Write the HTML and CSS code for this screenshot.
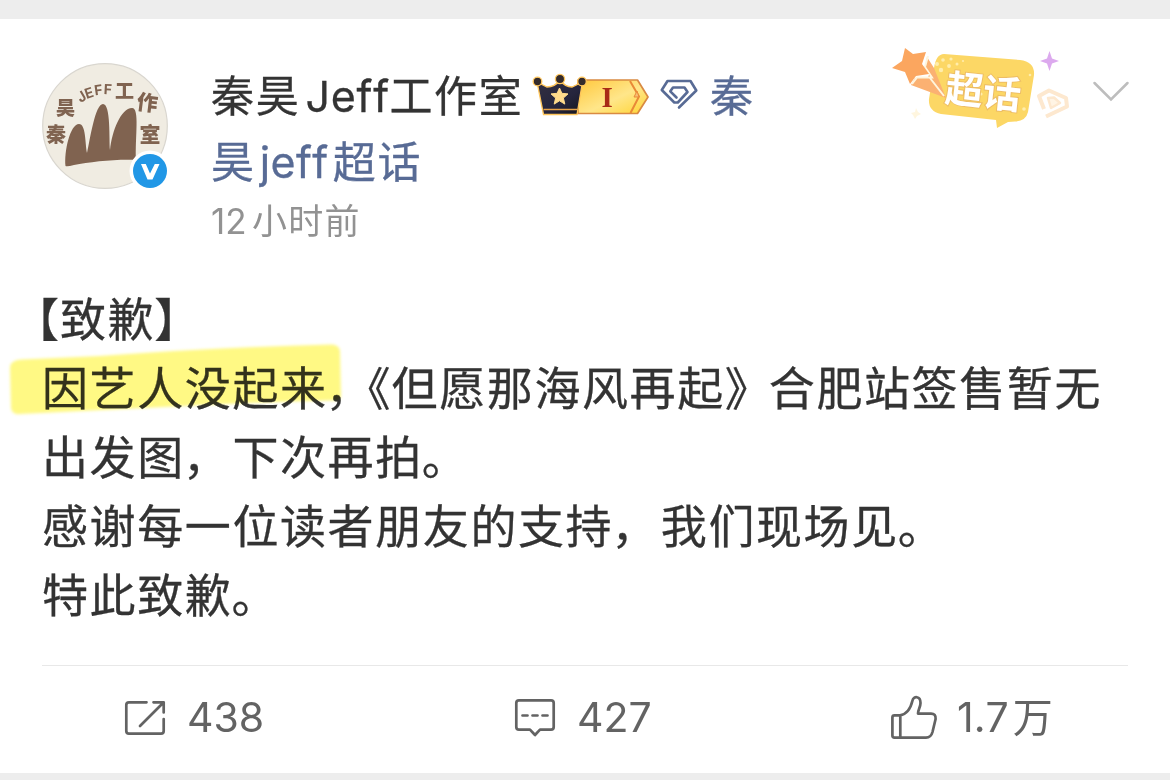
FILE: index.html
```html
<!DOCTYPE html>
<html lang="zh-CN">
<head>
<meta charset="utf-8">
<title>微博</title>
<link rel="stylesheet" href="styles.css">
</head>
<body>
<article class="card">
  <header class="head">
    <div class="avatar">
      <svg width="130" height="130" viewBox="40 61 130 130">
        <circle cx="105" cy="126" r="62.3" fill="#f0ece2" stroke="#d9d6cf" stroke-width="1.2"/>
        <path fill="#806350" d="M65.500 166C64 152 70 124 79 124C86 124 85 143 87 153C90 140 95 104 103 104C111 104 109 140 110 150C112 131 121 108 132 108C140 108 135 137 136 160C116 159 90 162 74 165Q67 167 65.500 166Z"/>
        <g class="logo-text">
          <text x="56" y="115" font-size="19">昊</text>
          <text x="46" y="142" font-size="20">秦</text>
          <text x="115" y="98" font-size="19">工</text>
          <text transform="translate(136 109) rotate(7)" font-size="21">作</text>
          <text x="139.500" y="142" font-size="21">室</text>
          <text class="latin" transform="translate(80.500 103) rotate(-31)">J</text>
          <text class="latin" transform="translate(86.500 99) rotate(-18)">E</text>
          <text class="latin" transform="translate(95 95.500) rotate(-8)">F</text>
          <text class="latin" transform="translate(103.500 94) rotate(3)">F</text>
        </g>
        <circle cx="150" cy="171" r="20.500" fill="#fff"/>
        <circle cx="150" cy="171" r="17" fill="#2197e6"/>
        <path d="M141 164H145.800L150 173.500L154.800 164H159.500L152.500 179.500H147.500Z" fill="#fff"/>
      </svg>
    </div>
    <div class="who">
      <div class="name-row">
        <span class="name">秦昊<span class="name-latin">Jeff</span>工作室</span>
        <svg class="vip" width="118" height="46" viewBox="532 72 118 46">
          <defs>
            <linearGradient id="gold" x1="0" y1="0" x2="1" y2="1"><stop offset="0" stop-color="#ffc83d"/><stop offset=".55" stop-color="#ffe68a"/><stop offset="1" stop-color="#ffd432"/></linearGradient>
            <linearGradient id="dark" x1="0" y1="0" x2="1" y2="1"><stop offset="0" stop-color="#343041"/><stop offset=".6" stop-color="#25253d"/><stop offset="1" stop-color="#16151c"/></linearGradient>
          </defs>
          <path d="M578 80H637.500L648 97L637.500 113.500H578Z" fill="url(#gold)" stroke="#d98a42" stroke-width="1.700" stroke-linejoin="round"/>
          <path d="M630 81L639 96.500L630.500 113" fill="none" stroke="#e98937" stroke-width="2"/>
          <path d="M637 91L634 97L639 97Z" fill="#f6be73" stroke="#e98937"/>
          <g fill="#342b2b" stroke="#ffc65c" stroke-width="1.300">
            <path d="M537 82L547 87Q555 87 560 80Q565 87 572 87L582.500 82L577 114.500H543.500Z" fill="url(#dark)"/>
            <circle cx="537.500" cy="81.500" r="4.300"/><circle cx="560" cy="79" r="4.600"/><circle cx="582" cy="81.500" r="4.300"/>
          </g>
          <path d="M543.500 109.500H577.500" stroke="#e7a247" stroke-width="1.500"/>
          <path d="M559.500 88L561.900 93.300L568 93.900L563.400 98L564.800 104.100L559.500 100.800L554.200 104.100L555.600 98L551 93.900L557.100 93.300Z" fill="#ffdb8c" stroke="#ffdb8c"/>
          <text class="level" x="601.500" y="107">I</text>
        </svg>
        <svg class="gem" width="40" height="34" viewBox="659 77 40 34" fill="none" stroke="#586b95" stroke-width="2.600" stroke-linejoin="round" stroke-linecap="round">
          <path d="M679 107.500L696.300 90.500L690.500 81H667.500L661.800 90L674.300 102.500H677.800L687.500 92L684.500 87.500H673L670.300 91.300L676.500 97.500"/>
        </svg>
        <span class="topic">秦</span>
      </div>
      <div class="topic second">昊<span class="topic-latin">jeff</span>超话</div>
      <div class="time"><span class="time-num">12</span>小时前</div>
    </div>
    <svg class="topic-badge" width="182" height="84" viewBox="890 46 182 84">
      <path d="M944 54L1020 60Q1035 62 1034 75L1028 112Q1026 121 1015 121.500L1008 122L997 128L996 120L941 114Q928 111 929 99L934 68Q936 54 944 54Z" fill="#fcd765"/>
      <g fill="#ffedac"><circle cx="937" cy="64" r="2"/><circle cx="943" cy="60" r="1.800"/><circle cx="951" cy="59" r="1.600"/><circle cx="941" cy="70" r="2.200"/><circle cx="949" cy="66" r="1.900"/><circle cx="957" cy="64" r="1.500"/><circle cx="963" cy="61" r="1.100"/><circle cx="1030" cy="75" r="1.300"/><circle cx="1024" cy="109" r="1.800"/><circle cx="981" cy="94" r="1.600"/></g>
      <path d="M927 57L934 68L946 98L911 85L915 78L928 77L930 73L925 68Z" fill="#fbb172"/>
      <path d="M912 84L917 77.500H932L925 67L928 56M930 78L944 96" fill="none" stroke="#fff5dc" stroke-width="2"/>
      <path d="M905 48L913 54L926 52L922 64L929 74L916 76L910 84L905 72L892 68L902 61Z" fill="#fba65f"/>
      <text class="badge-text" transform="translate(944 101.500) rotate(6)">超话</text>
      <path d="M1049.500 51L1052 58.500L1059 61L1052 63.500L1049.500 71L1047 63.500L1040 61L1047 58.500Z" fill="#dca9ee"/>
      <path d="M1044 109L1039 96L1049 90.500L1066 98L1067 106.500L1046 116.500" fill="none" stroke="#fde8cf" stroke-width="4" stroke-linejoin="round"/>
      <path d="M1048 98L1054 97.500L1060 103L1051 108Z" fill="#fff4e4" stroke="#fde8cf" stroke-width="2.500" stroke-linejoin="round"/>
      <path d="M916 108L918 112L921 114L917 116L915 119L913 115L911 113L915 112Z" fill="#fff6df"/>
    </svg>
    <svg class="chevron" width="38" height="22" viewBox="1092 80 38 22"><path d="M1094.500 83L1111 99.500L1127.500 83" fill="none" stroke="#bdbdbd" stroke-width="2.500" stroke-linecap="round"/></svg>
  </header>
  <div class="body">
    <p><span class="open-bracket">【</span>致歉<span class="close-bracket">】</span></p>
    <p class="marked">因艺人没起来<span class="half-comma">，</span><span class="open-book">《</span>但愿那海风再起<span class="close-book">》</span>合肥站签售暂无
      <svg class="marker" width="350" height="84" viewBox="0 340 350 84"><path d="M10 368Q10 360 22 359.500L100 356Q220 347 332 344.500Q340 345 340 352L341 396Q341 401 331 400.500C240 402 130 409 20 414Q12 415 11 408Z" fill="#fff984"/></svg>
    </p>
    <p>出发图<span class="pause">，</span>下次再拍<span class="stop">。</span></p>
    <p>感谢每一位读者朋友的支持<span class="pause">，</span>我们现场见<span class="stop">。</span></p>
    <p>特此致歉<span class="stop">。</span></p>
  </div>
  <footer class="actions">
    <div class="action share">
      <svg width="42" height="36" viewBox="124 699 42 36" fill="none" stroke="#636363" stroke-width="2.700" stroke-linecap="round" stroke-linejoin="round"><path d="M146.500 701.300H129Q126.300 701.300 126.300 704V730Q126.300 732.700 129 732.700H161Q163.700 732.700 163.700 730V718M153.500 701.300H163.700V711.500M163 702L140 725"/></svg>
      <span class="count">438</span>
    </div>
    <div class="action comment">
      <svg width="42" height="40" viewBox="514 698 42 40" fill="none" stroke="#636363" stroke-width="2.700" stroke-linecap="round" stroke-linejoin="round"><path d="M519 700.300H551Q553.700 700.300 553.700 703V727Q553.700 729.600 551 729.600H540L535 735L530 729.600H519Q516.300 729.600 516.300 727V703Q516.300 700.300 519 700.300ZM522.500 715.500H527.500M532.500 715.500H537.500M542.500 715.500H547.500"/></svg>
      <span class="count">427</span>
    </div>
    <div class="action like">
      <svg width="48" height="46" viewBox="890 693 48 46" fill="none" stroke="#636363" stroke-width="2.700" stroke-linecap="round" stroke-linejoin="round"><path d="M892.400 716.500Q892.400 714.400 894.500 714.400H900C908 713 911 706 912.500 699.500C913.500 695 920.500 694.500 920.500 702C920.500 706 918 709 918 712.600H931Q936 712.600 935.600 718L932.500 731Q931 736.600 926 736.600H894.500Q892.400 736.600 892.400 734.500ZM900.300 715V736"/></svg>
      <span class="count">1.7<span class="unit">万</span></span>
    </div>
  </footer>
</article>
</body>
</html>
```
FILE: styles.css
```css
* { box-sizing: border-box; }
body {
  margin: 0;
  padding-top: 19px;
  height: 780px;
  overflow: hidden;
  background: #ededed;
  font-family: Inter, "Noto Sans CJK SC", sans-serif;
  font-kerning: none;
  text-spacing-trim: space-all;
}
svg { display: block; flex: none; }
.card { height: 754px; background: #fff; }
.head { display: flex; height: 266px; padding-left: 40px; }
.avatar { padding-top: 42px; width: 171px; flex: none; }
.logo-text { fill: #806350; font-family: "Noto Sans CJK SC", sans-serif; font-weight: 900; }
.logo-text .latin { font-family: Inter, sans-serif; font-size: 14px; font-weight: 700; }
.who { width: 679px; padding-top: 44px; flex: none; }
.name-row { display: flex; height: 66px; line-height: 66px; }
.name { width: 321px; font-size: 43px; letter-spacing: 1.7px; color: #333; white-space: nowrap; -webkit-text-stroke: .3px; }
.name-latin { display: inline-block; width: 89px; padding-left: 5px; letter-spacing: .8px; }
.vip { margin-top: 9px; }
.level { font-family: "Liberation Serif", serif; font-size: 29px; font-weight: 700; fill: #a82b17; }
.gem { margin: 14px 0 0 9px; }
.topic { color: #586b95; font-size: 43px; letter-spacing: 1.7px; -webkit-text-stroke: .3px; }
.name-row .topic { margin-left: 11px; }
.second { height: 66px; line-height: 66px; }
.topic-latin { display: inline-block; width: 77px; padding-left: 4px; letter-spacing: .4px; }
.time { height: 52px; line-height: 52px; font-size: 35px; letter-spacing: 1.2px; color: #929292; }
.time-num { display: inline-block; width: 41px; letter-spacing: 0; }
.topic-badge { margin-top: 27px; }
.badge-text { font-family: "Noto Sans CJK SC", sans-serif; font-size: 38px; font-weight: 700; fill: #fff; stroke: #edbd65; stroke-width: 2px; paint-order: stroke; }
.chevron { margin: 61px 0 0 20px; }
.body { padding-left: 42px; height: 380px; }
.body p {
  margin: 0;
  height: 69px;
  line-height: 69px;
  font-size: 46px;
  letter-spacing: 1.6px;
  color: #333;
  white-space: nowrap;
  -webkit-text-stroke: .3px;
}
.open-bracket, .close-bracket, .half-comma, .open-book, .close-book {
  display: inline-block;
  width: 24px;
  font-feature-settings: "halt";
}
.open-bracket { margin-left: -6px; }
.close-bracket { margin-left: -1px; }
.marked { position: relative; }
.half-comma { margin-left: -2px; }
.open-book { margin-left: 18px; }
.close-book { margin-right: 20px; }
.pause { margin: 0 2px 0 -2px; }
.stop { margin-left: -1px; }
.marker { position: absolute; left: -42px; top: -14px; mix-blend-mode: multiply; filter: blur(1.5px); }
.actions {
  display: flex;
  margin: 0 42px;
  height: 108px;
  padding-bottom: 4px;
  border-top: 1px solid #e8e8e8;
}
.action { display: flex; align-items: center; color: #636363; }
.share { width: 390px; padding-left: 82px; }
.comment { width: 376px; padding-left: 82px; }
.like { padding-left: 82px; }
.like svg { margin-top: -2px; }
.count { margin: -1px 0 0 21px; font-size: 41px; line-height: 60px; white-space: nowrap; }
.like .count { margin-left: 19px; }
.unit { font-size: 40px; margin-left: 4px; }
```
